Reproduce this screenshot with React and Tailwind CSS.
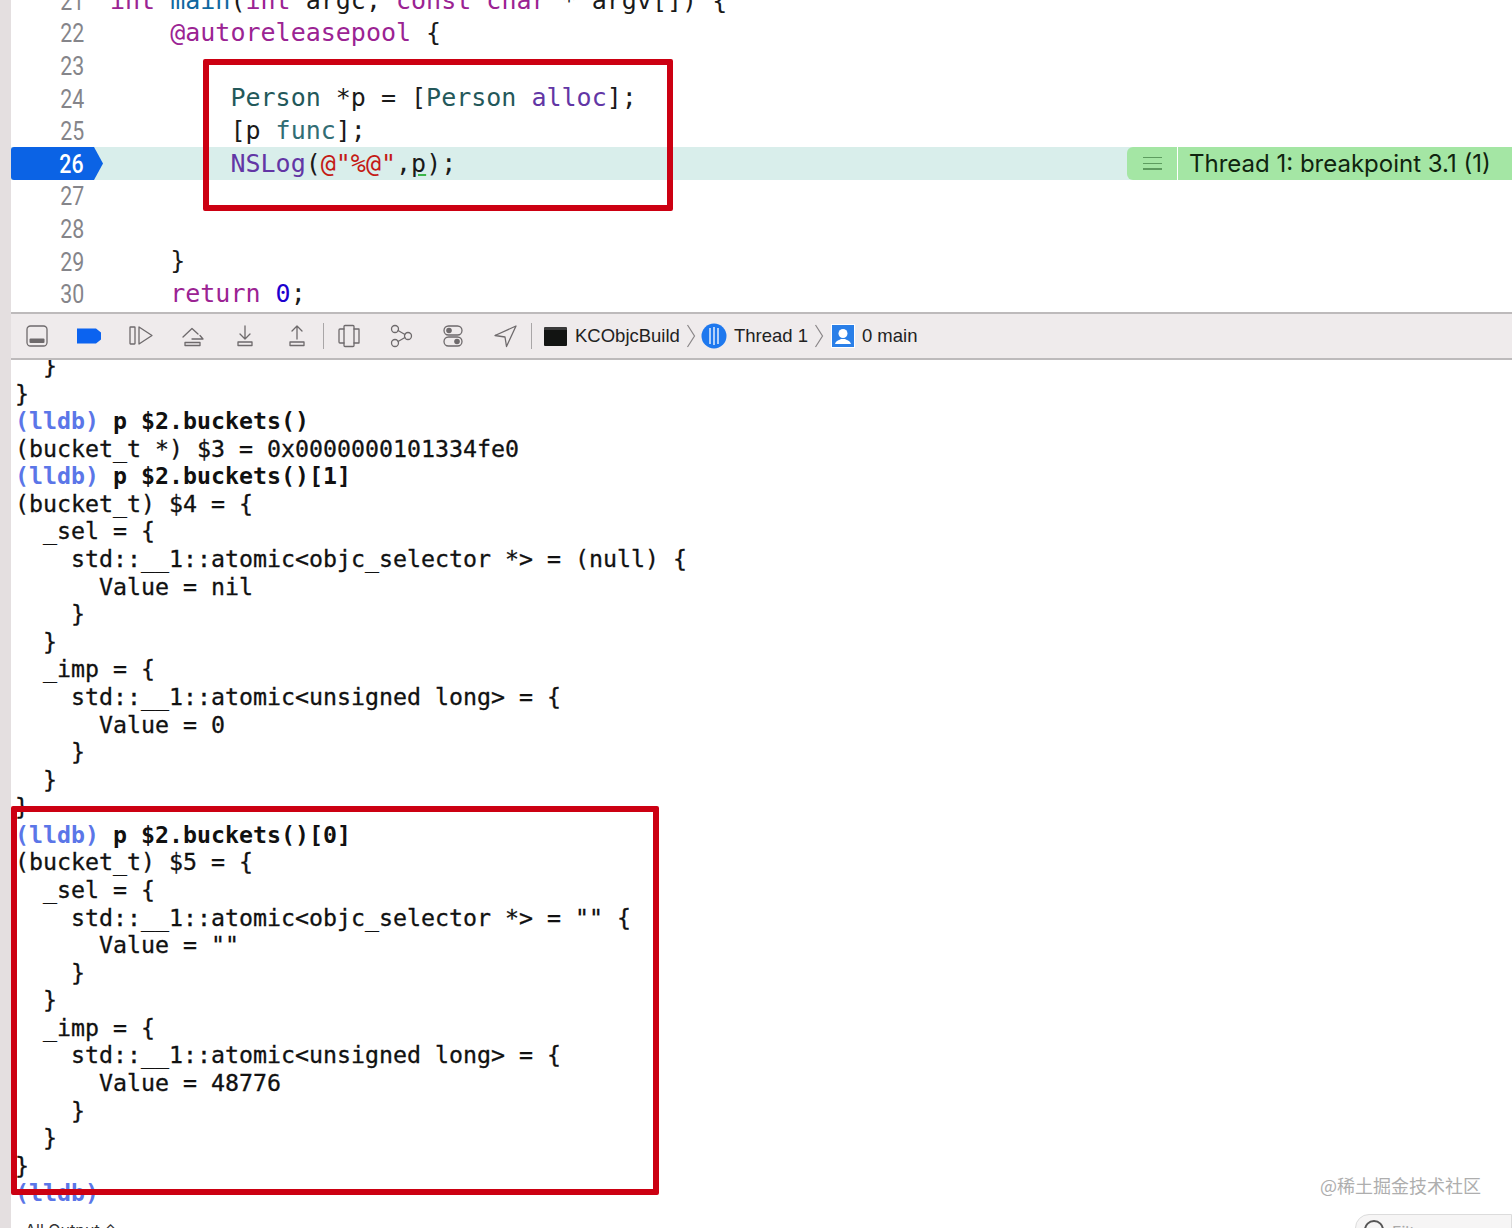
const MONO = { fontFamily: '"DejaVu Sans Mono", monospace' };

const kw = "text-[#9b2393]";
const type = "text-[#23585a]";
const method = "text-[#6236a5]";
const func = "text-[#326d74]";
const str = "text-[#c41a16]";
const num = "text-[#1c00cf]";

const editorRows = [
  { n: 21, code: <><span className={kw}>int</span> <span className="text-[#0f68a0]">main</span>(<span className={kw}>int</span> argc, <span className={kw}>const</span> <span className={kw}>char</span> * argv[]) {"{"}</> },
  { n: 22, code: <>    <span className={kw}>@autoreleasepool</span> {"{"}</> },
  { n: 23, code: "" },
  { n: 24, code: <>        <span className={type}>Person</span> *p = [<span className={type}>Person</span> <span className={method}>alloc</span>];</> },
  { n: 25, code: <>        [p <span className={func}>func</span>];</> },
  { n: 26, active: true, code: <>        <span className={method}>NSLog</span>(<span className={str}>@"%@"</span>,<span className="underline decoration-[#3ab54a] decoration-2 underline-offset-2">p</span>);</> },
  { n: 27, code: "" },
  { n: 28, code: "" },
  { n: 29, code: <>    {"}"}</> },
  { n: 30, code: <>    <span className={kw}>return</span> <span className={num}>0</span>;</> },
];

const consoleLines = [
  "  }",
  "}",
  { cmd: "p $2.buckets()" },
  "(bucket_t *) $3 = 0x0000000101334fe0",
  { cmd: "p $2.buckets()[1]" },
  "(bucket_t) $4 = {",
  "  _sel = {",
  "    std::__1::atomic<objc_selector *> = (null) {",
  "      Value = nil",
  "    }",
  "  }",
  "  _imp = {",
  "    std::__1::atomic<unsigned long> = {",
  "      Value = 0",
  "    }",
  "  }",
  "}",
  { cmd: "p $2.buckets()[0]" },
  "(bucket_t) $5 = {",
  "  _sel = {",
  '    std::__1::atomic<objc_selector *> = "" {',
  '      Value = ""',
  "    }",
  "  }",
  "  _imp = {",
  "    std::__1::atomic<unsigned long> = {",
  "      Value = 48776",
  "    }",
  "  }",
  "}",
  { cmd: "" },
];

const Stroke = ({ children }) => (
  <svg width="26" height="26" viewBox="0 0 26 26" fill="none" stroke="#6e6a6c" strokeWidth="1.3" strokeLinejoin="round" strokeLinecap="round">
    {children}
  </svg>
);

const toolbarIcons = [
  <Stroke key="panel">
    <rect x="3" y="3" width="20" height="20" rx="3.5" />
    <rect x="5.5" y="15.5" width="15" height="4.5" rx="1" fill="#6e6a6c" stroke="none" />
  </Stroke>,
  <svg key="bp" width="26" height="26" viewBox="0 0 26 26">
    <path d="M1 5.5h19l5 4v7l-5 4H1z" fill="#0b63f0" />
  </svg>,
  <Stroke key="continue">
    <rect x="2" y="4" width="5" height="17" rx="0.5" />
    <path d="M11 4l13 8.5L11 21z" />
  </Stroke>,
  <Stroke key="over">
    <path d="M3 14L12 5.5l6 5.5" />
    <path d="M12 16h11M23 16l-3-3.5" />
    <rect x="5" y="19.5" width="15" height="3" />
  </Stroke>,
  <Stroke key="in">
    <path d="M13 3v13M8 11l5 5 5-5" />
    <rect x="6" y="19" width="14" height="3.5" />
  </Stroke>,
  <Stroke key="out">
    <path d="M13 16V3M8 8l5-5 5 5" />
    <rect x="6" y="19" width="14" height="3.5" />
  </Stroke>,
  null,
  <Stroke key="views">
    <rect x="8" y="2.5" width="10" height="21" rx="1" />
    <path d="M8 6H4a1 1 0 0 0-1 1v12a1 1 0 0 0 1 1h4M18 6h5v14h-5" />
  </Stroke>,
  <Stroke key="graph">
    <circle cx="7" cy="6" r="3.5" />
    <circle cx="20" cy="13" r="3.5" />
    <circle cx="7" cy="20" r="3.5" />
    <path d="M10 7.5l7 4M10 18.5l7-4" />
  </Stroke>,
  <Stroke key="env">
    <rect x="4" y="3" width="18" height="9" rx="4.5" />
    <rect x="4" y="14" width="18" height="9" rx="4.5" />
    <circle cx="9" cy="7.5" r="2.8" fill="#6e6a6c" stroke="none" />
    <circle cx="17" cy="18.5" r="2.8" fill="#6e6a6c" stroke="none" />
  </Stroke>,
  <Stroke key="location">
    <path d="M24 3L3 12.5l10 1.5 1.5 9.5z" />
  </Stroke>,
  null,
];

const Chevron = () => (
  <svg width="10" height="26" viewBox="0 0 10 26" fill="none" stroke="#8a8688" strokeWidth="1.2" className="shrink-0">
    <path d="M1.5 2L8.5 13 1.5 24" />
  </svg>
);

const App = () => {
  return (
    <div className="relative flex h-[1228px] overflow-hidden bg-white">
      <div className="w-[11px] shrink-0 bg-[#e4dfe0]" />

      <div className="flex min-w-0 flex-1 flex-col">
        {/* editor */}
        <div className="h-[312px] shrink-0 overflow-hidden">
          <div className="-mt-[16px]">
            {editorRows.map((row) => (
              <div key={row.n} className={`flex h-[32.6px] items-center ${row.active ? "bg-[#d9eeeb]" : ""}`}>
                <div className="relative flex h-full w-[99px] shrink-0 items-center justify-end pr-[26px]">
                  {row.active && (
                    <svg className="absolute left-0 top-0" width="92" height="33" viewBox="0 0 92 33">
                      <path d="M3 0h80l9 16.5L83 33H3a3 3 0 0 1-3-3V3a3 3 0 0 1 3-3z" fill="#0b63e5" />
                    </svg>
                  )}
                  <span
                    className={`relative mt-[1px] origin-right scale-x-[0.82] text-[26px] leading-[32px] ${row.active ? "font-medium text-white" : "text-[#85858a]"}`}
                    style={{ fontFamily: "Roboto, sans-serif" }}
                  >
                    {row.n}
                  </span>
                </div>
                <div className="min-w-0 flex-1 whitespace-pre text-[25px] text-[#1a1a1a]" style={MONO}>
                  {row.code}
                </div>
                {row.active && (
                  <div className="flex h-full w-[385px] shrink-0 items-center" style={{ fontFamily: "Inter, sans-serif" }}>
                    <div className="flex h-full w-[51px] items-center justify-center rounded-l-md border-r border-white bg-[#a4e6a4]">
                      <div className="flex h-[13px] w-[19px] flex-col justify-between">
                        <div className="h-[1.5px] bg-[#5d9c5f]" />
                        <div className="h-[1.5px] bg-[#5d9c5f]" />
                        <div className="h-[1.5px] bg-[#5d9c5f]" />
                      </div>
                    </div>
                    <div className="flex h-full flex-1 items-center whitespace-pre bg-[#a4e6a4] pl-[11px] pt-[2px] text-[24px] text-[#10240f]">
                      Thread 1: breakpoint 3.1 (1)
                    </div>
                  </div>
                )}
              </div>
            ))}
          </div>
        </div>

        {/* debug bar */}
        <div className="flex h-[48px] shrink-0 items-center border-y-2 border-[#bdbabb] bg-[#efebec]">
          {toolbarIcons.map((icon, i) =>
            icon ? (
              <div key={i} className="flex w-[52px] shrink-0 items-center justify-center">
                {icon}
              </div>
            ) : (
              <div key={i} className="-mx-[0.5px] h-[26px] w-px shrink-0 bg-[#a9a6a7]" />
            )
          )}
          <div
            className="ml-[13px] flex items-center whitespace-pre text-[18.5px] text-[#222]"
            style={{ fontFamily: '"Liberation Sans", sans-serif' }}
          >
            <div className="mr-[8px] h-[19px] w-[23px] rounded-[1px] border-t-[3px] border-[#3a3a3a] bg-[#121412]" />
            <span>KCObjcBuild</span>
            <div className="ml-[6px] mr-[5px]"><Chevron /></div>
            <svg width="26" height="26" viewBox="0 0 26 26" className="shrink-0">
              <circle cx="13" cy="13" r="12.5" fill="#1e78ee" />
              <path d="M9 5v16M13 4v18M17 5v16" stroke="#fff" strokeWidth="1.3" />
            </svg>
            <span className="ml-[7px]">Thread 1</span>
            <div className="ml-[6px] mr-[7px]"><Chevron /></div>
            <svg width="24" height="24" viewBox="0 0 24 24" className="shrink-0">
              <rect width="24" height="24" fill="#fff" />
              <rect x="1" y="1" width="22" height="22" fill="#2a7fe8" />
              <circle cx="12" cy="9.5" r="4.5" fill="#fff" />
              <path d="M4 20c1-4 5-4 6-5h4c1 1 5 1 6 5z" fill="#fff" />
            </svg>
            <span className="ml-[7px]">0 main</span>
          </div>
        </div>

        {/* console */}
        <div className="min-h-0 flex-1 overflow-hidden whitespace-pre pl-[4px] text-[23.25px] text-[#111] [-webkit-text-stroke:0.3px_#111]" style={MONO}>
          <div className="-mt-[8px]">
            {consoleLines.map((line, i) => (
              <div key={i} className="h-[27.59px] leading-[27.59px]">
                {typeof line === "string" ? (
                  line
                ) : (
                  <span className="font-bold [-webkit-text-stroke:0]">
                    <span className="text-[#5b76e8]">(lldb)</span> {line.cmd}
                  </span>
                )}
              </div>
            ))}
          </div>
        </div>

        {/* filter bar */}
        <div className="flex h-[16px] shrink-0 items-start justify-between overflow-hidden bg-white" style={{ fontFamily: "Inter, sans-serif" }}>
          <div className="ml-[14px] mt-[8px] text-[16px] leading-[20px] text-[#333]">All Output ⌃</div>
          <div className="mt-[2px] flex h-[40px] w-[157px] items-start gap-[8px] rounded-l-[14px] border border-[#dcdcdc] bg-[#f6f5f5] pl-[8px] pt-[5px]">
            <div className="h-[20px] w-[20px] rounded-full border-2 border-[#555]" />
            <span className="text-[16px] text-[#aaa]">Filter</span>
          </div>
        </div>
      </div>

      {/* annotations on top of the screenshot */}
      <div className="pointer-events-none absolute left-[203px] top-[59px] h-[152px] w-[470px] rounded-[2px] border-[6px] border-[#cc0012]" />
      <div className="pointer-events-none absolute left-[11px] top-[806px] h-[389px] w-[648px] rounded-[2px] border-[6px] border-[#cc0012]" />
      <div
        className="absolute left-[1320px] top-[1172px] text-[18px] text-[#aeaeae]"
        style={{ fontFamily: '"Noto Sans CJK SC", sans-serif' }}
      >
        @稀土掘金技术社区
      </div>
    </div>
  );
};

export default App;
